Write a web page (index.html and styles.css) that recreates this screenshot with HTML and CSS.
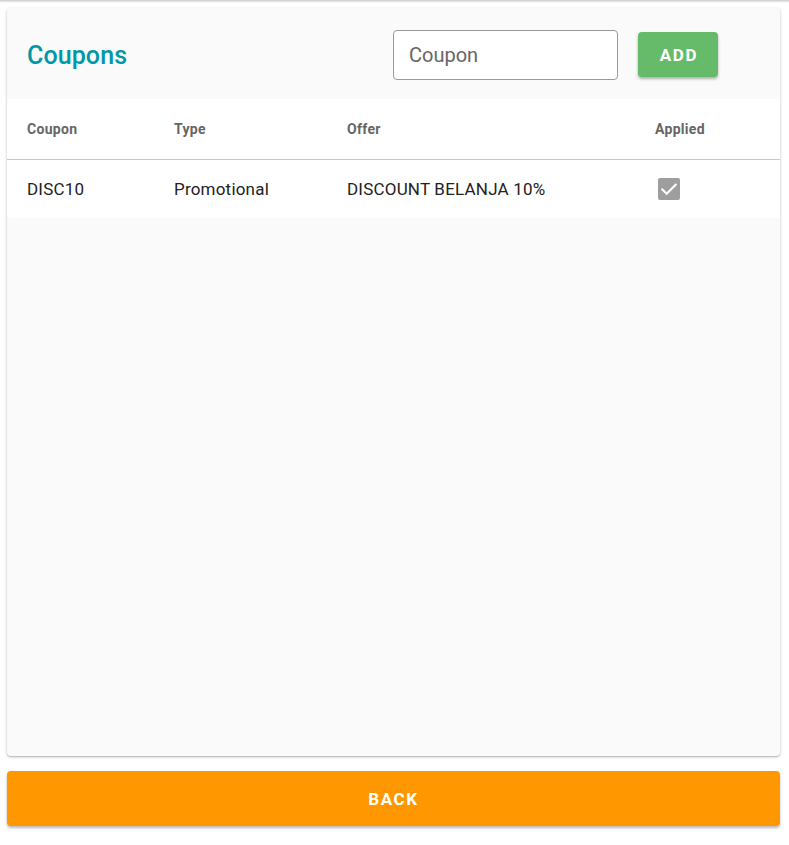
FILE: index.html
```html
<!DOCTYPE html>
<html>
<head>
<meta charset="utf-8">
<link rel="stylesheet" href="styles.css">
</head>
<body>
<div class="topbar"></div>
<main class="page">
  <section class="card">
    <header class="card-head">
      <h1 class="title">Coupons</h1>
      <div class="form">
        <input class="coupon-input" type="text" placeholder="Coupon">
        <button class="btn-add">ADD</button>
      </div>
    </header>
    <div class="table">
      <div class="row head">
        <div class="cell">Coupon</div>
        <div class="cell">Type</div>
        <div class="cell">Offer</div>
        <div class="cell">Applied</div>
      </div>
      <div class="row body">
        <div class="cell">DISC10</div>
        <div class="cell">Promotional</div>
        <div class="cell">DISCOUNT BELANJA 10%</div>
        <div class="cell">
          <span class="check">
            <svg width="20" height="20" viewBox="0 0 24 24"><path d="M4 12.5l5.2 5.2L20 7" fill="none" stroke="#fff" stroke-width="2.6" stroke-linecap="square"/></svg>
          </span>
        </div>
      </div>
    </div>
  </section>
  <button class="btn-back">BACK</button>
</main>
</body>
</html>
```
FILE: styles.css
```css
* { box-sizing: border-box; }
html, body { margin: 0; padding: 0; background: #fff; }
body { font-family: Roboto, "Liberation Sans", sans-serif; width: 789px; height: 845px; overflow: hidden; position: relative; }
.topbar {
  height: 3px;
  background: linear-gradient(#c9c9c9, #ececec 60%, #fff);
}
.page {
  padding: 5px 9px 0 7px;
  display: flex;
  flex-direction: column;
  gap: 15px;
}
.card {
  height: 748px;
  background: #fafafa;
  border-radius: 4px;
  box-shadow: 0 1px 3px rgba(0,0,0,0.25), 0 1px 1px rgba(0,0,0,0.1);
  display: flex;
  flex-direction: column;
}
.card-head {
  height: 91px;
  display: flex;
  align-items: center;
  justify-content: space-between;
  padding: 0 62px 0 20px;
}
.title {
  margin: 0;
  font-size: 25px;
  font-weight: 500;
  letter-spacing: 0.1px;
  color: #0097a7;
  position: relative;
  top: 2px;
}
.form {
  display: flex;
  align-items: center;
  gap: 20px;
  position: relative;
  top: 1px;
}
.coupon-input {
  width: 225px;
  height: 50px;
  border: 1px solid #9a9a9a;
  border-radius: 4px;
  background: #fff;
  padding: 0 15px;
  font-family: Roboto, "Liberation Sans", sans-serif;
  font-size: 20px;
  color: #333;
  outline: none;
}
.coupon-input::placeholder { color: #666; }
.btn-add {
  width: 80px;
  height: 45px;
  border: 0;
  border-radius: 4px;
  background: #66bb6a;
  color: #fff;
  font-family: Roboto, "Liberation Sans", sans-serif;
  font-size: 17px;
  font-weight: 700;
  letter-spacing: 1.6px;
  padding: 0 0 0 2px;
  box-shadow: 0 2px 3px rgba(0,0,0,0.3);
}
.table {
  background: #fff;
  border-radius: 4px;
}
.row {
  display: grid;
  grid-template-columns: 147px 173px 308px 1fr;
  align-items: center;
}
.row.head {
  height: 61px;
  border-bottom: 1px solid #c8c8c8;
  font-size: 14px;
  font-weight: 700;
  letter-spacing: 0.3px;
  color: #666;
}
.row.body {
  height: 58px;
  font-size: 17px;
  letter-spacing: 0.2px;
  color: #222;
}
.cell { padding-left: 20px; }
.row.body .cell:last-child { padding-left: 23px; display: flex; }
.check {
  width: 22px;
  height: 22px;
  border-radius: 2px;
  background: #9e9e9e;
  display: inline-flex;
  align-items: center;
  justify-content: center;
}
.btn-back {
  height: 55px;
  border: 0;
  border-radius: 4px;
  background: #ff9800;
  color: #fff;
  font-family: Roboto, "Liberation Sans", sans-serif;
  font-size: 17px;
  font-weight: 700;
  letter-spacing: 1.6px;
  box-shadow: 0 2px 3px rgba(0,0,0,0.28);
}
```
